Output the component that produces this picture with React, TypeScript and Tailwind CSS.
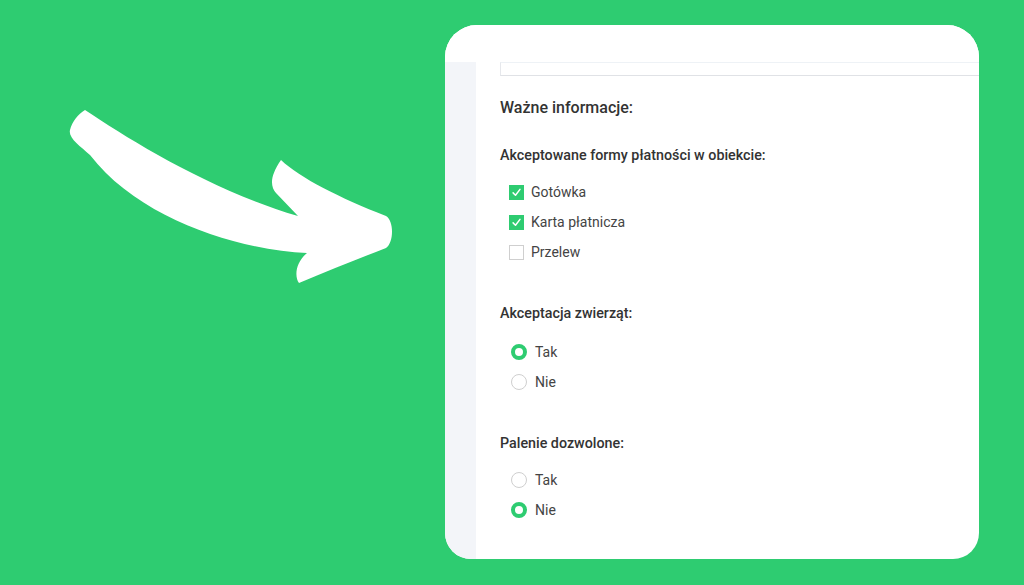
import React from "react";

const font = { fontFamily: "Roboto, 'Noto Sans', sans-serif" };

function Check({ checked, label }: { checked: boolean; label: string }) {
  return (
    <div className="flex h-[30px] items-center pl-[9px]">
      {checked ? (
        <span className="flex h-[15px] w-[15px] items-center justify-center bg-[#2ecc71]">
          <svg width="11" height="11" viewBox="0 0 12 12">
            <path d="M2.3 6.4 L4.9 9 L9.8 2.6" fill="none" stroke="white" strokeWidth="1.6" strokeLinecap="round" strokeLinejoin="round" />
          </svg>
        </span>
      ) : (
        <span className="h-[15px] w-[15px] border border-[#cfcfcf] bg-white" />
      )}
      <span className="ml-[7px] text-[14px] text-[#444]">{label}</span>
    </div>
  );
}

function Radio({ checked, label }: { checked: boolean; label: string }) {
  return (
    <div className="flex h-[30px] items-center pl-[11px]">
      {checked ? (
        <span className="h-[16px] w-[16px] rounded-full border-[4px] border-[#2ecc71] bg-white" />
      ) : (
        <span className="h-[16px] w-[16px] rounded-full border border-[#cfcfcf] bg-white" />
      )}
      <span className="ml-[8px] text-[14px] text-[#444]">{label}</span>
    </div>
  );
}

export default function App() {
  return (
    <div className="flex h-[585px] w-[1024px] overflow-hidden bg-[#2ecc71]" style={font}>
      <svg width="445" height="585" viewBox="0 0 445 585" className="shrink-0">
        <path
          fill="white"
          d="M85 110 C 130 140, 210 190, 298 216 L 276 193 C 270 186, 270 176, 281 160 C 300 178, 340 198, 386 216 C 394 221, 394 242, 386 248 C 360 258, 330 270, 299 283 C 294 276, 296 262, 307 253 C 240 250, 140 220, 90 155 C 80 146, 68 138, 70 130 C 72 122, 78 114, 85 110 Z"
        />
      </svg>
      <div className="mt-[25px] flex h-[534px] w-[534px] shrink-0 flex-col overflow-hidden rounded-t-[32px] rounded-b-[26px] bg-white">
        <div className="h-[37px] shrink-0 bg-white" />
        <div className="flex flex-1">
          <div className="w-[31px] shrink-0 bg-[#f3f5f9]" />
          <div className="flex-1 pl-[24px]">
            <div className="h-[14px] w-[600px] border-b border-l border-t border-b-[#e0e2e6] border-l-[#e6e8ec] border-t-[#eef2f6]" />
            <div className="mt-[22px] h-[20px] text-[16px] font-medium leading-[20px] text-[#333]">Ważne informacje:</div>
            <div className="mt-[28px] h-[18px] text-[14.3px] font-medium leading-[18px] text-[#333]">Akceptowane formy płatności w obiekcie:</div>
            <div className="mt-[13px]">
              <Check checked label="Gotówka" />
              <Check checked label="Karta płatnicza" />
              <Check checked={false} label="Przelew" />
            </div>
            <div className="mt-[37px] h-[18px] text-[14.3px] font-medium leading-[18px] text-[#333]">Akceptacja zwierząt:</div>
            <div className="mt-[15px]">
              <Radio checked label="Tak" />
              <Radio checked={false} label="Nie" />
            </div>
            <div className="mt-[37px] h-[18px] text-[14.3px] font-medium leading-[18px] text-[#333]">Palenie dozwolone:</div>
            <div className="mt-[13px]">
              <Radio checked={false} label="Tak" />
              <Radio checked label="Nie" />
            </div>
          </div>
        </div>
      </div>
    </div>
  );
}
